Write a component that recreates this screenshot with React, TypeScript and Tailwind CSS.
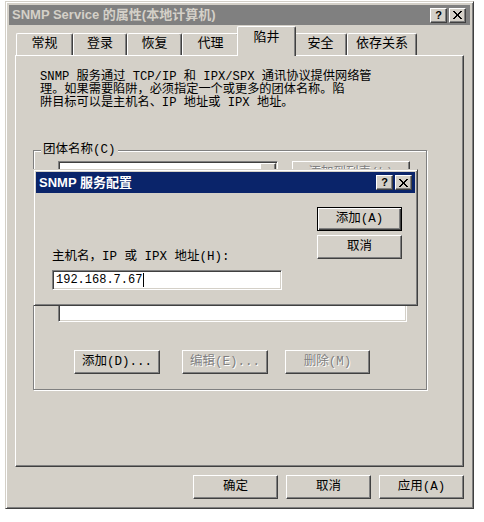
import React from "react";

const raised =
  "border border-t-white border-l-white border-r-[#404040] border-b-[#404040] shadow-[inset_-1px_-1px_0_#808080]";
const sunken =
  "border border-t-[#808080] border-l-[#808080] border-r-white border-b-white shadow-[inset_1px_1px_0_#404040,inset_-1px_-1px_0_#d4d0c8]";
const greyed = "text-[#808080] [text-shadow:1px_1px_0_#fff]";
const font = "font-['Liberation_Mono','Noto_Sans_CJK_SC',monospace]";

type BtnProps = {
  label: string;
  className: string;
  disabled?: boolean;
  isDefault?: boolean;
};

const Btn: React.FC<BtnProps> = ({ label, className, disabled, isDefault }) => (
  <div
    className={`flex h-[24px] items-center justify-center bg-[#d4d0c8] text-[12.5px] leading-none ${
      isDefault
        ? "border border-black shadow-[inset_1px_1px_0_#fff,inset_-1px_-1px_0_#404040,inset_-2px_-2px_0_#808080]"
        : raised
    } ${disabled ? greyed : "text-black"} ${className}`}
  >
    {label}
  </div>
);

const CaptionButtons = () => (
  <div className="flex gap-[2px]">
    <div className={`flex h-[15px] w-[17px] items-center justify-center bg-[#d4d0c8] ${raised}`}>
      <span className="font-['Liberation_Sans',sans-serif] text-[11px] font-bold leading-none text-black">?</span>
    </div>
    <div className={`flex h-[15px] w-[17px] items-center justify-center bg-[#d4d0c8] ${raised}`}>
      <svg width="9" height="8" viewBox="0 0 9 8" shapeRendering="crispEdges">
        <path d="M0 0h2v1h-2zM7 0h2v1h-2zM1 1h2v1h-2zM6 1h2v1h-2zM2 2h2v1h-2zM5 2h2v1h-2zM3 3h3v2h-3zM2 5h2v1h-2zM5 5h2v1h-2zM1 6h2v1h-2zM6 6h2v1h-2zM0 7h2v1h-2zM7 7h2v1h-2z" fill="#000" />
      </svg>
    </div>
  </div>
);

const tabs = [
  { label: "常规", w: "w-[57px]" },
  { label: "登录", w: "w-[54px]" },
  { label: "恢复", w: "w-[55px]" },
  { label: "代理", w: "w-[57px]" },
  { label: "陷井", w: "w-[55px]", active: true },
  { label: "安全", w: "w-[53px]" },
  { label: "依存关系", w: "w-[70px]" },
];

export default function App() {
  return (
    <div className={`relative h-[522px] w-[484px] overflow-hidden bg-white pl-[5px] pt-[1px] ${font}`}>
      {/* main property sheet */}
      <div className="flex h-[508px] w-[469px] flex-col border border-t-[#d4d0c8] border-l-[#d4d0c8] border-r-[#404040] border-b-[#404040] bg-[#d4d0c8] p-[3px] shadow-[inset_1px_1px_0_#fff,inset_-1px_-1px_0_#808080]">
        <div className="flex h-[20px] items-center justify-between bg-[#808080] pl-[3px] pr-[4px]">
          <span className="font-['Liberation_Sans','Noto_Sans_CJK_SC',sans-serif] text-[13px] font-bold text-[#d4d0c8]">
            SNMP Service 的属性(本地计算机)
          </span>
          <CaptionButtons />
        </div>

        <div className="mx-[6px] mt-[6px] flex h-[24px] items-end pl-[1px]">
          {tabs.map((t) =>
            t.active ? (
              <div
                key={t.label}
                className={`relative z-10 -mx-[2px] -mb-[1px] flex h-[25px] ${t.w} box-content items-start justify-center rounded-t-[2px] border border-b-0 border-t-white border-l-white border-r-[#404040] bg-[#d4d0c8] px-[1px] pt-[4px] text-[13px] leading-[14px] shadow-[inset_-1px_0_0_#808080]`}
              >
                {t.label}
              </div>
            ) : (
              <div
                key={t.label}
                className={`flex h-[22px] ${t.w} items-start justify-center rounded-t-[2px] border border-b-0 border-t-white border-l-white border-r-[#404040] pt-[3px] text-[13px] leading-[14px] shadow-[inset_-1px_0_0_#808080]`}
              >
                {t.label}
              </div>
            )
          )}
        </div>

        <div className={`mx-[6px] h-[412px] pl-[17px] pt-[15px] ${raised}`}>
          <div className="ml-[7px] whitespace-pre text-[12.2px] leading-[13px] text-black">
            <div>SNMP 服务通过 TCP/IP 和 IPX/SPX 通讯协议提供网络管</div>
            <div>理。如果需要陷阱，必须指定一个或更多的团体名称。陷</div>
            <div>阱目标可以是主机名、IP 地址或 IPX 地址。</div>
          </div>

          <div className="relative mt-[40px] h-[240px] w-[394px] border border-[#808080] pl-[24px] pt-[10px] shadow-[1px_1px_0_#fff,inset_1px_1px_0_#fff]">
            <span className="absolute -top-[8px] left-[7px] bg-[#d4d0c8] px-[2px] text-[12.5px] leading-[14px]">
              团体名称(C)
            </span>
            <div className="flex">
              <div className={`flex h-[21px] w-[220px] justify-end bg-white p-[1px] ${sunken}`}>
                <div className={`h-full w-[16px] bg-[#d4d0c8] ${raised}`} />
              </div>
              <div className="ml-[14px] flex w-[118px] flex-col gap-[5px]">
                <Btn label="添加到列表(L)" className="w-[118px]" disabled />
                <Btn label="从列表删除(R)" className="w-[118px]" disabled />
              </div>
            </div>
            <div className="mt-[4px] text-[12.5px] leading-[14px]">陷阱目标(T):</div>
            <div className={`mt-[6px] h-[84px] w-[349px] bg-white ${sunken}`} />
            <div className="ml-[16px] mt-[28px] flex">
              <Btn label="添加(D)..." className="w-[86px]" />
              <Btn label="编辑(E)..." className="ml-[22px] w-[86px]" disabled />
              <Btn label="删除(M)" className="ml-[17px] w-[85px]" disabled />
            </div>
          </div>
        </div>

        <div className="mr-[6px] mt-[8px] flex justify-end gap-[8px]">
          <Btn label="确定" className="w-[85px]" />
          <Btn label="取消" className="w-[85px]" />
          <Btn label="应用(A)" className="w-[85px]" />
        </div>
      </div>

      {/* modal dialog lying over the sheet */}
      <div className="absolute left-[33px] top-[169px] z-20 flex h-[137px] w-[385px] flex-col border border-t-[#d4d0c8] border-l-[#d4d0c8] border-r-[#404040] border-b-[#404040] bg-[#d4d0c8] p-[2px] shadow-[inset_1px_1px_0_#fff,inset_-1px_-1px_0_#808080]">
        <div className="flex h-[21px] items-center justify-between bg-[#0a246a] pl-[3px] pr-[3px]">
          <span className="font-['Liberation_Sans','Noto_Sans_CJK_SC',sans-serif] text-[13px] font-bold text-white">
            SNMP 服务配置
          </span>
          <CaptionButtons />
        </div>
        <div className="flex flex-1">
          <div className="flex-1 pl-[16px] pt-[57px]">
            <div className="text-[12.5px] leading-[14px]">主机名，IP 或 IPX 地址(H):</div>
            <div className={`mt-[6px] flex h-[20px] w-[230px] items-center bg-white pl-[3px] ${sunken}`}>
              <span className="text-[12px] leading-none">192.168.7.67</span>
              <span className="ml-[1px] h-[14px] w-px bg-black" />
            </div>
          </div>
          <div className="mr-[13px] flex flex-col gap-[4px] pt-[14px]">
            <Btn label="添加(A)" className="w-[85px]" isDefault />
            <Btn label="取消" className="w-[85px]" />
          </div>
        </div>
      </div>
    </div>
  );
}
